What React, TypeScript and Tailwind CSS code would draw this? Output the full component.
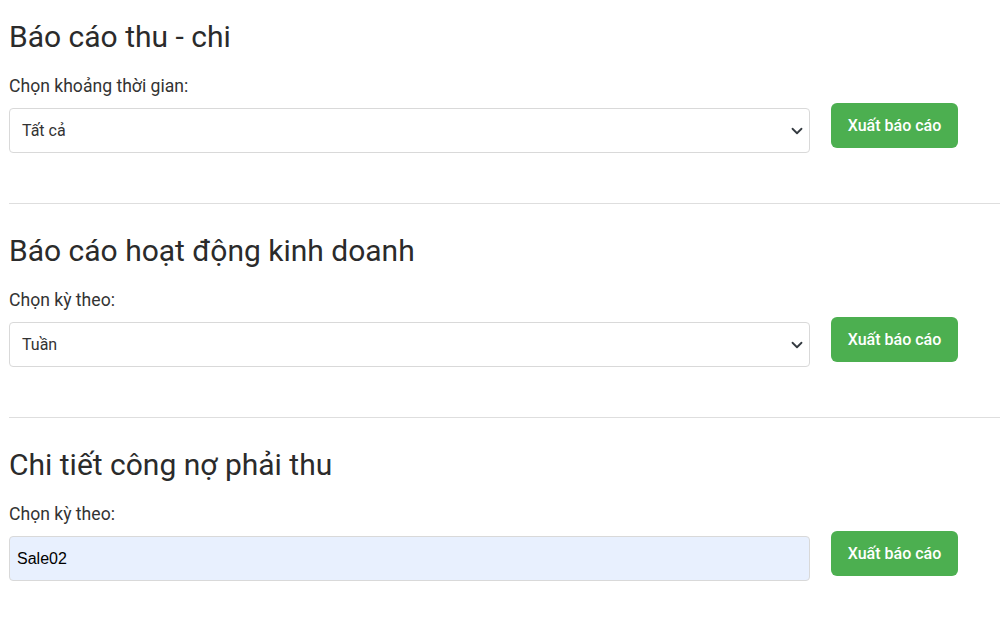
import React from 'react';

const sections = [
  { title: 'Báo cáo thu - chi', label: 'Chọn khoảng thời gian:', value: 'Tất cả', kind: 'select' },
  { title: 'Báo cáo hoạt động kinh doanh', label: 'Chọn kỳ theo:', value: 'Tuần', kind: 'select' },
  { title: 'Chi tiết công nợ phải thu', label: 'Chọn kỳ theo:', value: 'Sale02', kind: 'input' },
];

const Chevron = () => (
  <svg width="12" height="12" viewBox="0 0 16 16" className="absolute right-[6px] top-1/2 -translate-y-1/2">
    <path d="M2 5l6 6 6-6" fill="none" stroke="#343a40" strokeWidth="2.4" strokeLinecap="round" strokeLinejoin="round" />
  </svg>
);

const App: React.FC = () => {
  return (
    <div className="min-h-[630px] w-[1000px] overflow-hidden bg-white pl-[9px] font-['Roboto',sans-serif] text-[#333]">
      {sections.map((s, idx) => (
        <div key={idx}>
          {idx > 0 && <hr className="mt-[50px] mb-[10px] w-[1000px] border-t border-[#dedede]" />}
          <h2 className="pt-[19px] text-[30px] leading-[36px] font-normal text-[#2b2b2b]">{s.title}</h2>
          <div className="mt-[20px] text-[17.6px] leading-[22px]">{s.label}</div>
          <div className="mt-[6px] flex items-start">
            {s.kind === 'select' ? (
              <div className="relative mt-[5px] h-[45px] w-[801px] rounded-[4px] border border-[#d9d9d9] bg-white">
                <div className="flex h-full items-center pl-[12px] text-[16px] text-[#333]">{s.value}</div>
                <Chevron />
              </div>
            ) : (
              <div className="mt-[5px] flex h-[45px] w-[801px] items-center rounded-[4px] border border-[#d9d9d9] bg-[#e8f0fe] pl-[7px] font-['Liberation_Sans',Arial,sans-serif] text-[16px] text-black">
                {s.value}
              </div>
            )}
            <button className="ml-[21px] h-[45px] w-[127px] rounded-[6px] bg-[#4caf50] text-[16px] font-medium text-white">
              Xuất báo cáo
            </button>
          </div>
        </div>
      ))}
    </div>
  );
};

export default App;
